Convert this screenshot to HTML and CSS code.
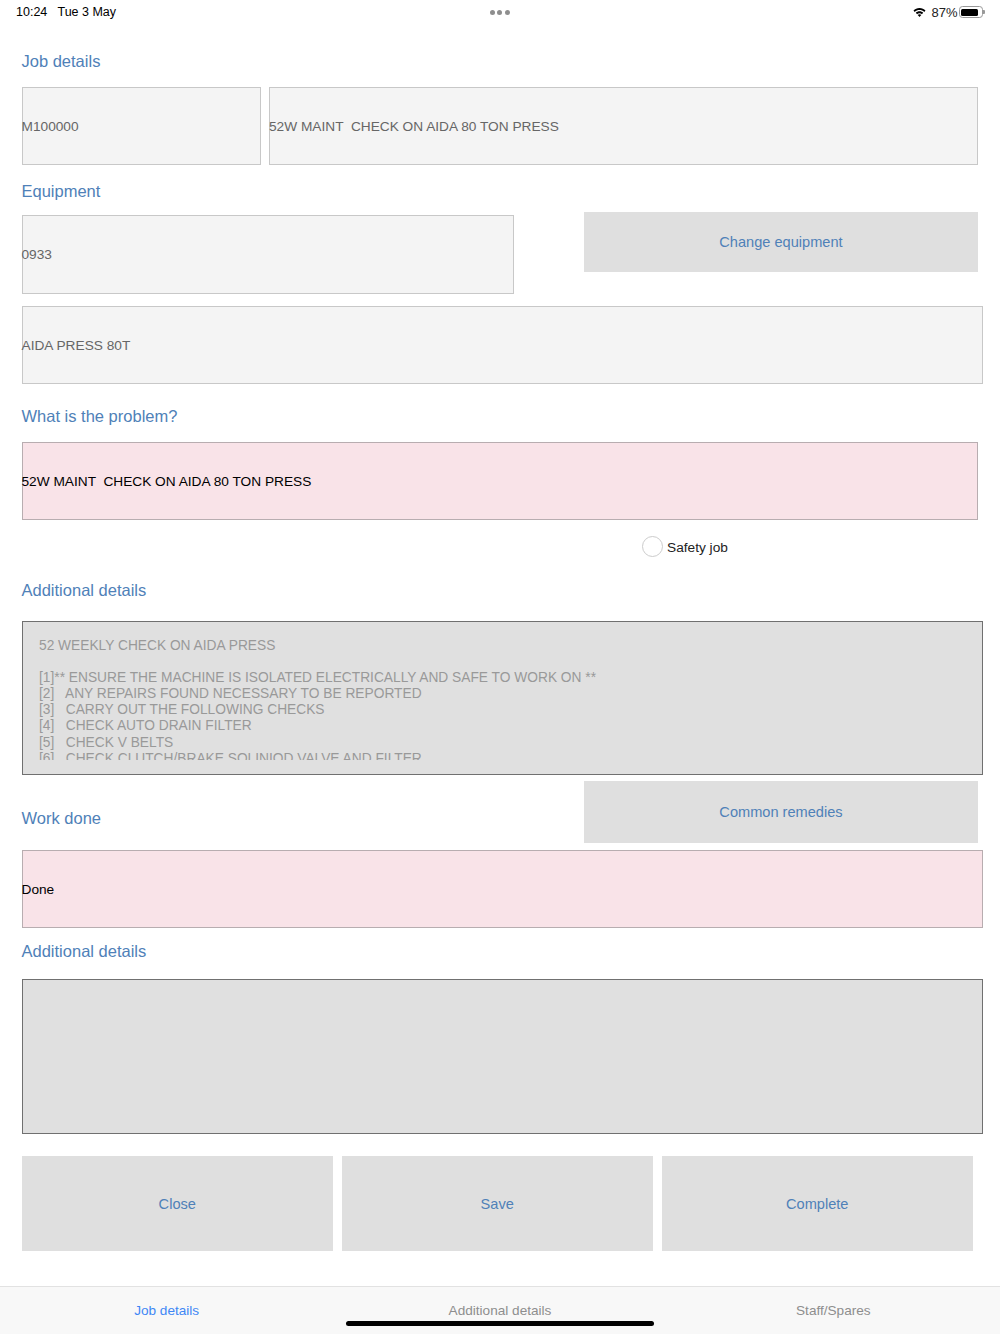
FILE: index.html
```html
<!DOCTYPE html>
<html lang="en">
<head>
    <meta charset="UTF-8">
    <meta name="viewport" content="width=device-width, initial-scale=1.0">
    <title>Job details</title>
    <link rel="stylesheet" href="styles.css">
</head>
<body>
    <header class="status-bar">
        <div class="status-left">10:24 &nbsp; Tue 3 May</div>
        <div class="status-dots"><span></span><span></span><span></span></div>
        <div class="status-right">
            <svg class="wifi" width="13" height="11" viewBox="0 0 16 12">
                <path d="M8 .6C5 .6 2.500 1.700.6 3.600l1.600 1.700C3.700 3.800 5.700 3 8 3s4.300.8 5.800 2.300l1.600-1.700C13.500 1.700 11 .6 8 .6z" fill="#000"/>
                <path d="M8 4.500c-1.800 0-3.300.7-4.500 1.800L5 8C5.800 7.200 6.800 6.800 8 6.800s2.200.4 3 1.200l1.500-1.700C11.300 5.200 9.800 4.500 8 4.500z" fill="#000"/>
                <path d="M8 8.300c-.9 0-1.600.3-2.200.8L8 11.500l2.200-2.400c-.6-.5-1.300-.8-2.200-.8z" fill="#000"/>
            </svg>
            <span class="battery-pct">87%</span>
            <div class="battery"><div class="battery-level"></div></div>
            <div class="battery-cap"></div>
        </div>
    </header>

    <main class="form">
        <h2 class="label label-job">Job details</h2>
        <div class="row row-job">
            <div class="field field-code">M100000</div>
            <div class="field field-title">52W MAINT &nbsp;CHECK ON AIDA 80 TON PRESS</div>
        </div>

        <h2 class="label label-equipment">Equipment</h2>
        <div class="row row-equipment">
            <div class="field field-equipment">0933</div>
            <button class="btn btn-change">Change equipment</button>
        </div>
        <div class="field field-wide field-desc">AIDA PRESS 80T</div>

        <h2 class="label label-problem">What is the problem?</h2>
        <div class="field field-pink field-problem">52W MAINT &nbsp;CHECK ON AIDA 80 TON PRESS</div>

        <div class="safety">
            <span class="radio"></span>
            <span class="safety-text">Safety job</span>
        </div>

        <h2 class="label label-additional">Additional details</h2>
        <div class="notes notes-filled">
            <div class="notes-text">52 WEEKLY CHECK ON AIDA PRESS

[1]** ENSURE THE MACHINE IS ISOLATED ELECTRICALLY AND SAFE TO WORK ON **
[2]   ANY REPAIRS FOUND NECESSARY TO BE REPORTED
[3]   CARRY OUT THE FOLLOWING CHECKS
[4]   CHECK AUTO DRAIN FILTER
[5]   CHECK V BELTS
[6]   CHECK CLUTCH/BRAKE SOLINIOD VALVE AND FILTER</div>
        </div>

        <div class="row row-work">
            <h2 class="label label-work">Work done</h2>
            <button class="btn btn-remedies">Common remedies</button>
        </div>
        <div class="field field-wide field-pink field-done">Done</div>

        <h2 class="label label-additional-2">Additional details</h2>
        <div class="notes notes-empty"></div>

        <div class="actions">
            <button class="btn btn-action">Close</button>
            <button class="btn btn-action">Save</button>
            <button class="btn btn-action">Complete</button>
        </div>
    </main>

    <nav class="tabs">
        <a href="#" class="tab active">Job details</a>
        <a href="#" class="tab">Additional details</a>
        <a href="#" class="tab">Staff/Spares</a>
    </nav>
    <div class="home-bar"></div>
</body>
</html>
```

FILE: styles.css
```css
* { box-sizing: border-box; }
html, body { margin: 0; padding: 0; }
body {
    width: 1000px;
    height: 1334px;
    overflow: hidden;
    position: relative;
    background: #fff;
    font-family: "Liberation Sans", Arial, sans-serif;
    font-size: 13.7px;
    color: #000;
}

/* Status bar */
.status-bar {
    height: 24px;
    padding: 0 15px 0 16px;
    display: grid;
    grid-template-columns: 1fr auto 1fr;
    align-items: center;
    font-size: 12.5px;
}
.status-dots { display: flex; gap: 2.5px; margin-left: -2px; }
.status-dots span {
    width: 5px;
    height: 5px;
    border-radius: 50%;
    background: #8e8e8e;
}
.status-right {
    display: flex;
    align-items: center;
    justify-content: flex-end;
    color: #222;
}
.battery-pct { margin-left: 5px; font-size: 13px; }
.battery {
    width: 24px;
    height: 12px;
    margin-left: 1px;
    border: 1px solid #999;
    border-radius: 3.5px;
    padding: 1.5px;
}
.battery-level {
    width: 87%;
    height: 100%;
    background: #000;
    border-radius: 1.5px;
}
.battery-cap {
    width: 2px;
    height: 4px;
    margin-left: .5px;
    background: #999;
    border-radius: 0 1px 1px 0;
}

/* Form */
.form { padding: 0 0 0 21.5px; }
.label {
    margin: 0;
    font-size: 16.5px;
    font-weight: normal;
    line-height: 20px;
    color: #4f81b8;
}
.label-job { margin-top: 27px; }
.label-equipment { margin-top: 15.5px; }
.label-problem { margin-top: 22px; }
.label-additional { margin-top: 22.5px; }
.label-additional-2 { margin-top: 12.5px; }

.row { display: flex; }
.field {
    height: 78px;
    display: flex;
    align-items: center;
    white-space: pre;
    text-indent: -1px;
    background: #f4f4f4;
    border: 1px solid #c8c8c8;
    color: #666;
}
.field-wide { width: 961.5px; }
.field-pink { background: #f9e3e8; border-color: #b8adb0; color: #000; }

.row-job { margin-top: 16px; gap: 8px; }
.field-code { width: 239.5px; }
.field-title { width: 709px; }

.row-equipment { margin-top: 11.5px; align-items: flex-start; gap: 70px; }
.field-equipment { width: 492.5px; height: 79px; margin-top: 3px; }
.field-desc { margin-top: 12px; }

.field-problem { width: 956.5px; margin-top: 16px; }

.safety {
    margin: 15.5px 0 0 620px;
    height: 22px;
    display: flex;
    align-items: center;
    gap: 4.5px;
    color: #222;
}
.safety-text { padding-top: 1px; }
.radio {
    width: 21px;
    height: 21px;
    border: 1px solid #ccc;
    border-radius: 50%;
}

.btn {
    border: 0;
    padding: 0;
    background: #dfdfdf;
    color: #4f81b8;
    font-family: inherit;
    font-size: 14.6px;
}
.btn-change { width: 394px; height: 60px; }

.notes {
    width: 961.5px;
    height: 154px;
    background: #e0e0e0;
    border: 1px solid #707070;
}
.notes-filled { margin-top: 21px; padding: 16px 16.5px 0; }
.notes-text {
    height: 122px;
    overflow: hidden;
    white-space: pre;
    font-size: 13.75px;
    line-height: 16.1px;
    color: #999;
}

.row-work { margin-top: 6px; height: 62px; }
.label-work { width: 562.5px; margin-top: 27px; }
.btn-remedies { width: 394px; height: 62px; }
.field-done { margin-top: 7px; }
.notes-empty { margin-top: 18.5px; height: 155px; }

.actions { margin-top: 22px; display: flex; gap: 8.5px; }
.btn-action { width: 311.5px; height: 95px; }

/* Tab bar */
.tabs {
    position: absolute;
    left: 0;
    right: 0;
    bottom: 0;
    height: 48px;
    display: grid;
    grid-template-columns: repeat(3, 1fr);
    padding-top: 16px;
    background: #f8f8f8;
    border-top: 1px solid #e2e2e2;
    text-align: center;
}
.tab { color: #8e8e8e; text-decoration: none; font-size: 13.6px; }
.tab.active { color: #3f87f5; }
.home-bar {
    position: absolute;
    left: 346px;
    bottom: 8px;
    width: 308px;
    height: 5px;
    background: #000;
    border-radius: 3px;
}
```
